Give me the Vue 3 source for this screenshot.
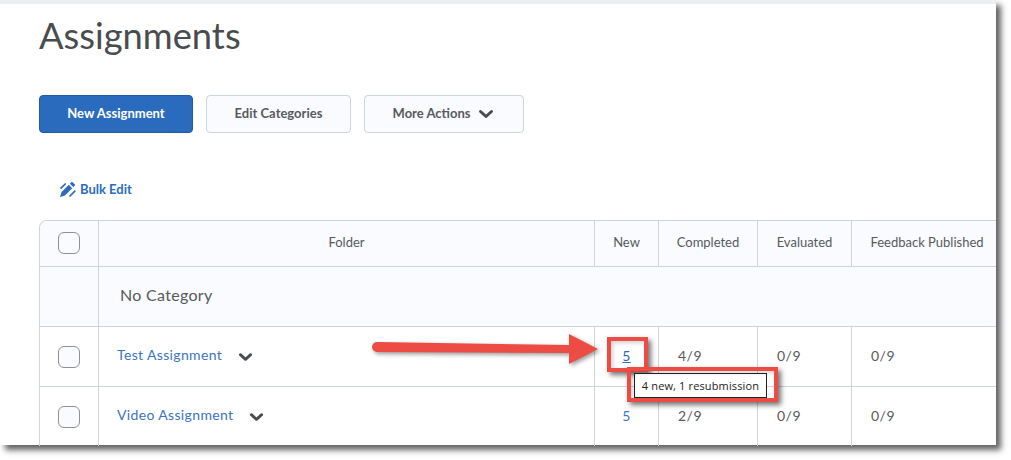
<script setup>
const rows = [
  { name: 'Test Assignment', isNew: '5', completed: '4/9', evaluated: '0/9', published: '0/9', hover: true },
  { name: 'Video Assignment', isNew: '5', completed: '2/9', evaluated: '0/9', published: '0/9', hover: false }
]
const heads = ['Folder', 'New', 'Completed', 'Evaluated', 'Feedback Published']
</script>

<template>
  <div class="page">
    <div class="panel">
      <h1 class="title">Assignments</h1>
      <div class="actions">
        <button class="btn primary">New Assignment</button>
        <button class="btn edit">Edit Categories</button>
        <button class="btn more">More Actions
          <svg class="chev" width="16" height="10" viewBox="0 0 16 10"><path d="M2.500 2.500l5.500 5 5.500-5" /></svg>
        </button>
      </div>
      <div class="bulk">
        <svg width="18" height="17" viewBox="0 0 18 17">
          <path fill="#2a6bbd" d="M1 16l1.600-5L9.800 3.800l3.400 3.400L6 14.400zM10.900 2.700l1.400-1.400a1 1 0 0 1 1.400 0l2 2a1 1 0 0 1 0 1.400L14.300 6.100z" />
          <path stroke="#2a6bbd" stroke-width="1.700" stroke-linecap="round" fill="none" d="M2 7.200L6.200 3M11 15l4.800-4.800" />
        </svg>
        <span>Bulk Edit</span>
      </div>
      <div class="table">
        <div class="cell head check"><span class="box"></span></div>
        <div v-for="h in heads" :key="h" class="cell head center">{{ h }}</div>

        <div class="cell cat"></div>
        <div class="cell cat name wide">No Category</div>

        <template v-for="r in rows" :key="r.name">
          <div class="cell row check"><span class="box"></span></div>
          <div class="cell row folder">
            <a class="link">{{ r.name }}</a>
            <svg class="chev" width="16" height="10" viewBox="0 0 16 10"><path d="M2.500 2.500l5.500 5 5.500-5" /></svg>
          </div>
          <div class="cell row center lift"><a class="link num" :class="{ under: r.hover }">{{ r.isNew }}</a></div>
          <div class="cell row data">{{ r.completed }}</div>
          <div class="cell row data">{{ r.evaluated }}</div>
          <div class="cell row data">{{ r.published }}</div>
        </template>
      </div>

      <svg class="arrow" width="240" height="44" viewBox="0 0 240 44">
        <path fill="#ec4c44" d="M7 12L199 15V4L228 19 199 34V23L7 22A5 5 0 0 1 7 12Z" />
      </svg>
      <div class="mark mark-num"></div>
      <div class="tip">4 new, 1 resubmission</div>
      <div class="mark mark-tip"></div>
    </div>
  </div>
</template>

<style>
html, body { margin: 0; background: #fff; }
</style>

<style scoped>
.page {
  height: 460px;
  overflow: hidden;
}
.panel {
  position: relative;
  box-sizing: border-box;
  width: 996px;
  height: 445px;
  padding: 0 0 0 39px;
  background: #fff;
  border-top: 4px solid #eceef3;
  box-shadow: 5px 5px 6px rgba(0, 0, 0, .62);
  font-family: Lato, sans-serif;
  color: #565a5c;
  clip-path: inset(0 -15px -15px 0);
}
.title {
  margin: 0;
  height: 91px;
  font-size: 36.300px;
  line-height: 62px;
  font-weight: 400;
  color: #494c4e;
}
.actions { display: flex; gap: 13px; height: 38px; }
.btn {
  box-sizing: border-box;
  height: 38px;
  border: 1px solid #cdd5dc;
  border-radius: 4px;
  background: #f9fbff;
  font: 700 13px Lato, sans-serif;
  color: #565a5c;
  padding: 0 0 2px;
}
.primary { width: 154px; background: #2a6bbd; border-color: #1f5ba5; color: #fff; }
.edit { width: 145px; }
.more { width: 160px; display: flex; align-items: center; justify-content: center; gap: 8px; padding: 0 1px 2px 0; }
.chev { fill: none; stroke: #494c4e; stroke-width: 3; stroke-linecap: round; stroke-linejoin: round; }
.more .chev { margin-top: 2px; }
.bulk {
  display: flex;
  align-items: center;
  gap: 3px;
  height: 34px;
  margin-top: 39px;
  margin-bottom: 14px;
  padding-left: 20px;
  color: #2a6bbd;
  font-size: 13px;
  font-weight: 700;
}
.table {
  display: grid;
  grid-template-columns: 59px 496px 64px 99px 94px 151px;
  grid-template-rows: 46px 60px 60px 59px;
  width: 957px;
  overflow: hidden;
  border-left: 1px solid #cdd5dc;
  border-top: 1px solid #cdd5dc;
  border-top-left-radius: 8px;
  box-sizing: border-box;
  font-size: 13px;
}
.cell {
  box-sizing: border-box;
  display: flex;
  align-items: center;
  border-right: 1px solid #cdd5dc;
  border-bottom: 1px solid #cdd5dc;
  min-width: 0;
}
.head { background: #f9fbff; padding-bottom: 4px; }
.head.check { padding-bottom: 2px; }
.center { justify-content: center; }
.check { justify-content: center; }
.cat { background: #f9fbff; }
.wide { grid-column: 2 / 7; padding-left: 21px; padding-bottom: 4px; font-size: 16px; border-right: none; letter-spacing: .3px; }
.row:nth-last-child(-n+6) { border-bottom: none; }
.folder { padding-left: 18px; padding-bottom: 5px; gap: 16px; }
.folder .chev { width: 15px; margin-top: 5px; }
.lift { padding-bottom: 3px; }
.data { padding-left: 19px; padding-bottom: 2px; font-size: 14px; letter-spacing: .5px; }
.box {
  box-sizing: border-box;
  width: 22px;
  height: 22px;
  border: 1.500px solid #8d9196;
  border-radius: 6px;
  background: #f9fbff;
}
.link { color: #3a74c0; font-size: 14px; letter-spacing: .35px; }
.num { font-size: 14px; }
.under { text-decoration: underline; color: #2a66b0; }
.arrow {
  position: absolute;
  left: 370px;
  top: 326px;
  filter: drop-shadow(2px 2px 2px rgba(0, 0, 0, .4));
}
.mark {
  position: absolute;
  box-sizing: border-box;
  border: 4px solid #ec4c44;
  box-shadow: 3px 3px 5px rgba(0, 0, 0, .55), inset 2px 2px 4px rgba(0, 0, 0, .18);
}
.mark-num { left: 607px; top: 333px; width: 41px; height: 35px; }
.mark-tip { left: 627px; top: 363px; width: 151px; height: 35px; }
.tip {
  position: absolute;
  left: 634px;
  top: 369px;
  box-sizing: border-box;
  width: 133px;
  height: 25px;
  border: 1px solid #222;
  background: #fff;
  color: #222;
  font: 11px/23px "Open Sans", sans-serif;
  letter-spacing: .14px;
  text-align: center;
}
</style>
